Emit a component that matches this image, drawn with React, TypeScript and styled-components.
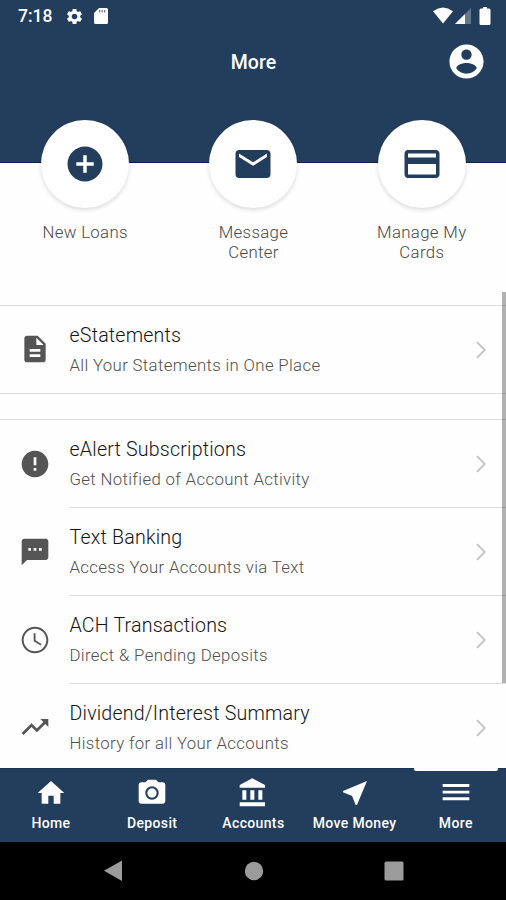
import React from "react";
import styled, { createGlobalStyle } from "styled-components";

const navy = "#223e5c";

const Global = createGlobalStyle`
  * { box-sizing: border-box; }
  body { margin: 0; background: #fff; font-family: Roboto, "Liberation Sans", sans-serif; }
`;

const Screen = styled.div`
  width: 506px;
  height: 900px;
  display: flex;
  flex-direction: column;
  overflow: hidden;
  background: #fefefe;
`;

const Header = styled.header`
  height: 163px;
  flex: none;
  background: ${navy};
  border-bottom: 1px solid #10204f;
  color: #fff;
`;

const StatusBar = styled.div`
  height: 32px;
  display: flex;
  align-items: center;
  justify-content: space-between;
  padding: 0 15px 0 18px;
`;

const StatusGroup = styled.div<{ $gap: number }>`
  display: flex;
  align-items: center;
  gap: ${(p) => p.$gap}px;
`;

const Clock = styled.span`
  width: 34px;
  margin-right: 3px;
  font-size: 17.5px;
  font-weight: 500;
  letter-spacing: 0;
`;

const TitleBar = styled.div`
  height: 58px;
  display: grid;
  grid-template-columns: 1fr auto 1fr;
  align-items: center;
  padding: 0 19px;
`;

const Title = styled.h1`
  grid-column: 2;
  margin: 3px 0 0 1px;
  font-size: 19.5px;
  font-weight: 500;
  letter-spacing: 0.1px;
`;

const Profile = styled.div`
  justify-self: end;
  display: flex;
`;

const Shortcuts = styled.section`
  flex: none;
  display: grid;
  grid-template-columns: repeat(3, 1fr);
  height: 185px;
  margin-top: -43px;
  padding-left: 1px;
`;

const Shortcut = styled.div`
  display: flex;
  flex-direction: column;
  align-items: center;
`;

const Disc = styled.div`
  width: 88px;
  height: 88px;
  border-radius: 50%;
  display: flex;
  align-items: center;
  justify-content: center;
  background: #fff;
  color: ${navy};
  box-shadow: 0 2px 4px rgba(0, 0, 0, 0.14);
`;

const ShortcutLabel = styled.div`
  width: 110px;
  margin-top: 14px;
  text-align: center;
  font-size: 16.8px;
  font-weight: 360;
  line-height: 20px;
  letter-spacing: 0.35px;
  color: #484848;
`;

const ListArea = styled.main`
  flex: 1;
  min-height: 0;
  overflow: hidden;
`;

const Group = styled.div`
  border-top: 1px solid #dcdcdc;
  border-bottom: 1px solid #dcdcdc;
  margin-bottom: 25px;
`;

const Row = styled.div`
  display: flex;
  height: 88px;
  padding-left: 19px;
  &:last-child {
    height: 87px;
  }
`;

const RowIcon = styled.div`
  width: 50px;
  display: flex;
  align-items: center;
  padding-bottom: 1px;
  color: #555;
`;

const RowBody = styled.div<{ $divided: boolean }>`
  flex: 1;
  display: flex;
  align-items: center;
  justify-content: space-between;
  padding-right: 19px;
  border-bottom: ${(p) => (p.$divided ? "1px solid #dcdcdc" : "none")};
`;

const RowTitle = styled.div`
  padding-top: 1px;
  font-size: 19.6px;
  font-weight: 360;
  line-height: 26px;
  letter-spacing: 0.2px;
  color: #141414;
`;

const RowSub = styled.div`
  margin-top: 4px;
  font-size: 16.8px;
  font-weight: 360;
  line-height: 24px;
  letter-spacing: 0.34px;
  color: #505050;
`;

const RowText = styled.div`
  padding-left: 0.5px;
`;

const Scrollbar = styled.div`
  position: absolute;
  left: 502px;
  top: 292px;
  width: 4px;
  height: 391px;
  background: rgba(0, 0, 0, 0.3);
`;

const TabBar = styled.nav`
  flex: none;
  height: 74px;
  display: grid;
  grid-template-columns: repeat(5, 1fr);
  background: ${navy};
  box-shadow: inset 0 1px #1a3557;
  color: #fff;
`;

const Tab = styled.div<{ $active?: boolean }>`
  position: relative;
  display: flex;
  flex-direction: column;
  align-items: center;
  padding: 9px 0 0 0.8px;
  white-space: nowrap;
  &::before {
    content: "";
    display: ${(p) => (p.$active ? "block" : "none")};
    position: absolute;
    top: -1px;
    left: 9px;
    width: 84px;
    height: 4px;
    border-radius: 0 0 2px 2px;
    background: #fff;
  }
`;

const TabLabel = styled.span`
  margin-top: 4.5px;
  font-size: 14px;
  line-height: 18px;
  font-weight: 480;
  letter-spacing: 0.35px;
`;

const SystemBar = styled.footer`
  flex: none;
  height: 58px;
  display: flex;
  align-items: center;
  justify-content: center;
  gap: 120px;
  padding-left: 1px;
  background: #000;
  color: #9b9b9b;
`;

type IconProps = { size: number; d: string; children?: React.ReactNode };
const Icon = ({ size, d, children }: IconProps) => (
  <svg width={size} height={size} viewBox="0 0 24 24" fill="currentColor">
    <path d={d} />
    {children}
  </svg>
);

const paths = {
  settings:
    "M19.14 12.94c.04-.3.06-.61.06-.94 0-.32-.02-.64-.07-.94l2.03-1.58c.18-.14.23-.41.12-.61l-1.92-3.32c-.12-.22-.37-.29-.59-.22l-2.39.96c-.5-.38-1.03-.7-1.62-.94l-.36-2.54c-.04-.24-.24-.41-.48-.41h-3.84c-.24 0-.43.17-.47.41l-.36 2.54c-.59.24-1.13.57-1.62.94l-2.39-.96c-.22-.08-.47 0-.59.22L2.74 8.87c-.12.21-.08.47.12.61l2.03 1.58c-.05.3-.09.63-.09.94s.02.64.07.94l-2.03 1.58c-.18.14-.23.41-.12.61l1.92 3.32c.12.22.37.29.59.22l2.39-.96c.5.38 1.03.7 1.62.94l.36 2.54c.05.24.24.41.48.41h3.84c.24 0 .44-.17.47-.41l.36-2.54c.59-.24 1.13-.56 1.62-.94l2.39.96c.22.08.47 0 .59-.22l1.92-3.32c.12-.22.07-.47-.12-.61l-2.01-1.58zM12 15.6c-1.98 0-3.6-1.62-3.6-3.6s1.62-3.6 3.6-3.6 3.6 1.62 3.6 3.6-1.62 3.6-3.6 3.6z",
  account:
    "M12 2C6.48 2 2 6.48 2 12s4.48 10 10 10 10-4.48 10-10S17.52 2 12 2zm0 3c1.66 0 3 1.34 3 3s-1.34 3-3 3-3-1.34-3-3 1.34-3 3-3zm0 14.2c-2.5 0-4.71-1.28-6-3.22.03-1.99 4-3.08 6-3.08 1.99 0 5.97 1.09 6 3.08-1.29 1.94-3.5 3.22-6 3.22z",
  plus: "M12 2C6.48 2 2 6.48 2 12s4.48 10 10 10 10-4.48 10-10S17.52 2 12 2zm5 11h-4v4h-2v-4H7v-2h4V7h2v4h4v2z",
  mail: "M20 4H4c-1.1 0-1.99.9-1.99 2L2 18c0 1.1.9 2 2 2h16c1.1 0 2-.9 2-2V6c0-1.1-.9-2-2-2zm0 4l-8 5-8-5V6l8 5 8-5v2z",
  card: "M20 4H4c-1.11 0-1.99.89-1.99 2L2 18c0 1.11.89 2 2 2h16c1.11 0 2-.89 2-2V6c0-1.11-.89-2-2-2zm0 14H4v-6h16v6zm0-9.700H4V6h16v2.300z",
  document:
    "M14 2H6c-1.1 0-1.99.9-1.99 2L4 20c0 1.1.89 2 1.99 2H18c1.1 0 2-.9 2-2V8l-6-6zm2 16H8v-2h8v2zm0-4H8v-2h8v2zm-3-5V3.5L18.5 9H13z",
  alert: "M12 2C6.48 2 2 6.48 2 12s4.48 10 10 10 10-4.48 10-10S17.52 2 12 2zm1 15h-2v-2h2v2zm0-4h-2V7h2v6z",
  sms: "M20 2H4c-1.1 0-1.99.9-1.99 2L2 22l4-4h14c1.1 0 2-.9 2-2V4c0-1.1-.9-2-2-2zM9 11H7V9h2v2zm4 0h-2V9h2v2zm4 0h-2V9h2v2z",
  clock:
    "M11.99 2C6.47 2 2 6.48 2 12s4.47 10 9.99 10C17.52 22 22 17.52 22 12S17.52 2 11.99 2zM12 20.5c-4.7 0-8.5-3.8-8.5-8.5s3.8-8.5 8.5-8.5 8.5 3.8 8.5 8.5-3.8 8.5-8.5 8.5zM12.4 7H11v6l5.25 3.15.65-1.13-4.5-2.77z",
  trend: "M16 6l2.29 2.29-4.88 4.88-4-4L2 16.59 3.41 18l6-6 4 4 6.3-6.29L22 12V6z",
  home: "M10 20v-6h4v6h5v-8h3L12 3 2 12h3v8z",
  camera:
    "M9 2L7.17 4H4c-1.1 0-2 .9-2 2v12c0 1.1.9 2 2 2h16c1.1 0 2-.9 2-2V6c0-1.1-.9-2-2-2h-3.17L15 2H9zm3 15c-2.76 0-5-2.24-5-5s2.24-5 5-5 5 2.24 5 5-2.24 5-5 5z",
  bank: "M4 10v7h3v-7H4zm6 0v7h3v-7h-3zM2 22h19v-3H2v3zm14-12v7h3v-7h-3zm-4.5-9L2 6v2h19V6l-9.5-5z",
  send: "M21 3L3 10.53v.98l6.84 2.65L12.48 21h.98L21 3z",
  menu: "M2 5.300h20v2.150H2zM2 10.300h20v2.150H2zM2 15.200h20v2.150H2z",
};

const Chevron = () => (
  <svg width="12" height="20" viewBox="0 0 12 20" fill="none" stroke="#c2c2c2" strokeWidth="1.8">
    <path d="M2 2.2L9.8 10 2 17.800" />
  </svg>
);

type Item = { title: string; sub: string; icon: string };
const statements: Item[] = [
  { title: "eStatements", sub: "All Your Statements in One Place", icon: paths.document },
];
const services: Item[] = [
  { title: "eAlert Subscriptions", sub: "Get Notified of Account Activity", icon: paths.alert },
  { title: "Text Banking", sub: "Access Your Accounts via Text", icon: paths.sms },
  { title: "ACH Transactions", sub: "Direct & Pending Deposits", icon: paths.clock },
  { title: "Dividend/Interest Summary", sub: "History for all Your Accounts", icon: paths.trend },
];

const List = ({ items }: { items: Item[] }) => (
  <Group>
    {items.map((item, i) => (
      <Row key={item.title}>
        <RowIcon>
          <Icon size={32} d={item.icon} />
        </RowIcon>
        <RowBody $divided={i < items.length - 1}>
          <RowText>
            <RowTitle>{item.title}</RowTitle>
            <RowSub>{item.sub}</RowSub>
          </RowText>
          <Chevron />
        </RowBody>
      </Row>
    ))}
  </Group>
);

export default function App() {
  return (
    <Screen>
      <Global />
      <Header>
        <StatusBar>
          <StatusGroup $gap={10}>
            <Clock>7:18</Clock>
            <Icon size={19} d={paths.settings} />
            <svg width="14" height="16" viewBox="0 0 14 16" fill="#fff">
              <path d="M5 0h7.5A1.5 1.5 0 0 1 14 1.500V14.500A1.500 1.500 0 0 1 12.500 16h-11A1.500 1.500 0 0 1 0 14.500V5z" />
              <path d="M5 2h1.300v2.500H5zM7.500 2h1.300v2.500H7.500zM10 2h1.300v2.500H10z" fill={navy} opacity=".65" />
            </svg>
          </StatusGroup>
          <svg width="58" height="18" viewBox="0 0 58 18" fill="#fff">
            <path d="M0 4.200Q10 -3 20 4.200L10 16.500z" />
            <path d="M38 1v16H22z" opacity=".3" />
            <path d="M32 7v10H22z" />
            <path d="M50 1.500V0h4v1.500h2a1.500 1.500 0 0 1 1.500 1.500v13.500a1.500 1.500 0 0 1-1.500 1.500h-8.500A1.500 1.500 0 0 1 46.500 16.500V3A1.500 1.500 0 0 1 48 1.500z" />
          </svg>
        </StatusBar>
        <TitleBar>
          <Title>More</Title>
          <Profile>
            <Icon size={41} d={paths.account} />
          </Profile>
        </TitleBar>
      </Header>
      <Shortcuts>
        <Shortcut>
          <Disc><Icon size={42} d={paths.plus} /></Disc>
          <ShortcutLabel>New Loans</ShortcutLabel>
        </Shortcut>
        <Shortcut>
          <Disc><Icon size={42} d={paths.mail} /></Disc>
          <ShortcutLabel>Message<br />Center</ShortcutLabel>
        </Shortcut>
        <Shortcut>
          <Disc><Icon size={42} d={paths.card} /></Disc>
          <ShortcutLabel>Manage My<br />Cards</ShortcutLabel>
        </Shortcut>
      </Shortcuts>
      <ListArea>
        <List items={statements} />
        <List items={services} />
      </ListArea>
      <Scrollbar />
      <TabBar>
        <Tab>
          <Icon size={32} d={paths.home} />
          <TabLabel>Home</TabLabel>
        </Tab>
        <Tab>
          <Icon size={32} d={paths.camera}><circle cx="12" cy="12" r="3.500" /></Icon>
          <TabLabel>Deposit</TabLabel>
        </Tab>
        <Tab>
          <Icon size={32} d={paths.bank} />
          <TabLabel>Accounts</TabLabel>
        </Tab>
        <Tab>
          <Icon size={32} d={paths.send} />
          <TabLabel>Move Money</TabLabel>
        </Tab>
        <Tab $active>
          <Icon size={32} d={paths.menu} />
          <TabLabel>More</TabLabel>
        </Tab>
      </TabBar>
      <SystemBar>
        <svg width="20" height="22" viewBox="0 0 20 22" fill="currentColor"><path d="M18 .5v20.500L0 10.750z" /></svg>
        <svg width="20" height="20" viewBox="0 0 20 20" fill="currentColor"><circle cx="10" cy="10" r="9.200" /></svg>
        <svg width="20" height="20" viewBox="0 0 20 20" fill="currentColor"><rect x=".5" y=".5" width="19" height="19" rx="1.500" /></svg>
      </SystemBar>
    </Screen>
  );
}
